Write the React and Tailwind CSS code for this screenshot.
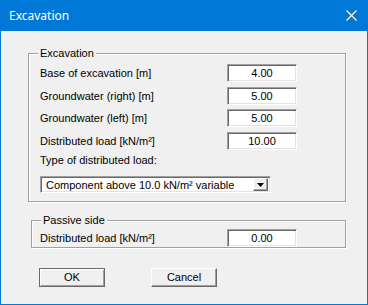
import React from "react";

const sunken =
  "border border-t-[#a0a0a0] border-l-[#a0a0a0] border-r-white border-b-white shadow-[inset_1px_1px_0_#696969,inset_-1px_-1px_0_#e3e3e3]";

function Field({ value }) {
  return (
    <div className={`w-[70px] h-[18px] bg-white flex items-center justify-center ${sunken}`}>
      <span className="pt-[1px]">{value}</span>
    </div>
  );
}

function Row({ label, value, className = "" }) {
  return (
    <div className={`flex items-center h-[18px] ${className}`}>
      <span className="w-[187px]">{label}</span>
      <Field value={value} />
    </div>
  );
}

function GroupBox({ title, className = "", children }) {
  return (
    <div
      className={`relative border border-[#a0a0a0] shadow-[inset_1px_1px_0_#ffffff,1px_1px_0_#ffffff] ${className}`}
    >
      <span className="absolute -top-[8px] left-[9px] px-[2px] bg-[#f0f0f0] leading-[14px]">{title}</span>
      {children}
    </div>
  );
}

export default function App() {
  return (
    <div
      className="w-[368px] h-[305px] border border-[#0078d7] bg-[#f0f0f0] flex flex-col text-[11px] text-black"
      style={{ fontFamily: '"Liberation Sans", Arial, sans-serif' }}
    >
      <div className="h-[30px] bg-[#0078d7] flex items-center justify-between pl-[8px] pr-[10px] shrink-0">
        <span className="text-white text-[12px] -mt-[1px]" style={{ fontFamily: '"Noto Sans", "Open Sans", sans-serif' }}>
          Excavation
        </span>
        <svg width="11" height="11" viewBox="0 0 11 11" className="mt-[-1px]">
          <path d="M0.5 0.5 L10.5 10.5 M10.5 0.5 L0.5 10.5" stroke="white" strokeWidth="1.1" />
        </svg>
      </div>

      <div className="flex flex-col">
        <GroupBox title="Excavation" className="ml-[27px] mt-[22px] w-[318px] h-[149px] pl-[11px] pt-[10px]">
          <Row label="Base of excavation [m]" value="4.00" />
          <Row label="Groundwater (right) [m]" value="5.00" className="mt-[5px]" />
          <Row label="Groundwater (left) [m]" value="5.00" className="mt-[4px]" />
          <Row label="Distributed load [kN/m²]" value="10.00" className="mt-[5px]" />
          <div className="mt-[3px] h-[15px] flex items-center">Type of distributed load:</div>
          <div className={`mt-[8px] w-[231px] h-[17px] bg-white flex items-center justify-between ${sunken} pl-[5px] pr-[2px]`}>
            <span className="pt-[1px]">Component above 10.0 kN/m² variable</span>
            <div className="w-[15px] h-[13px] bg-[#f0f0f0] border border-t-white border-l-white border-r-[#696969] border-b-[#696969] shadow-[inset_-1px_-1px_0_#a0a0a0] flex items-center justify-center">
              <svg width="7" height="4" viewBox="0 0 7 4">
                <path d="M0 0 H7 L3.5 4 Z" fill="black" />
              </svg>
            </div>
          </div>
        </GroupBox>

        <GroupBox title="Passive side" className="ml-[30px] mt-[18px] w-[315px] h-[28px] pl-[8px] pt-[8px]">
          <Row label="Distributed load [kN/m²]" value="0.00" />
        </GroupBox>

        <div className="flex mt-[20px] ml-[38px] gap-[46px]">
          <button className="w-[66px] h-[19px] bg-[#f0f0f0] border border-[#696969] shadow-[inset_1px_1px_0_#ffffff,inset_-1px_-1px_0_#a0a0a0] flex items-center justify-center">
            OK
          </button>
          <button className="w-[66px] h-[19px] bg-[#f0f0f0] border border-t-white border-l-white border-r-[#696969] border-b-[#696969] shadow-[inset_-1px_-1px_0_#a0a0a0] flex items-center justify-center">
            Cancel
          </button>
        </div>
      </div>
    </div>
  );
}
